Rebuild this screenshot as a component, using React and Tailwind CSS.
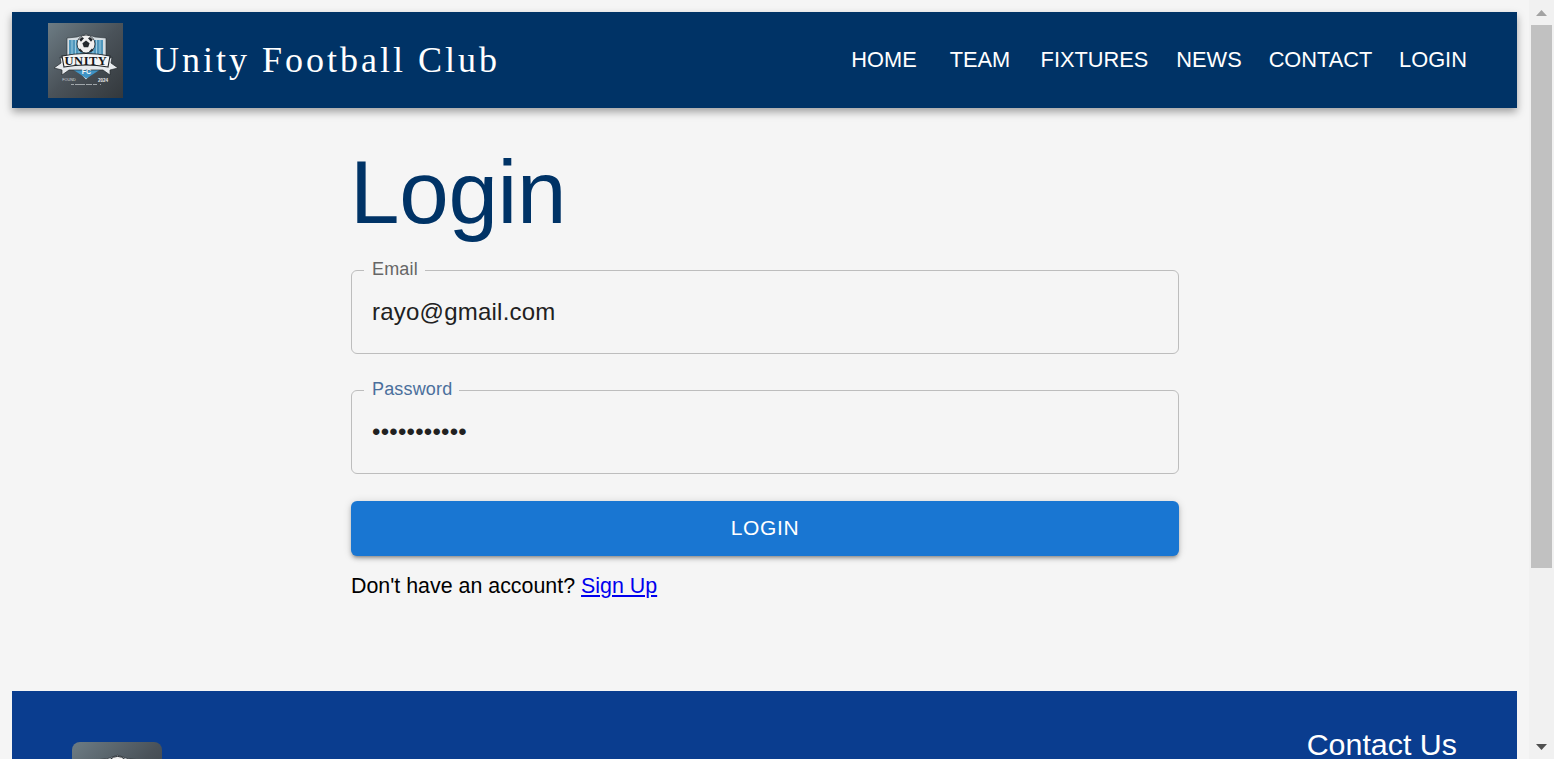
import React from "react";

const navItems = [
  { label: "HOME", width: "w-[100px]" },
  { label: "TEAM", width: "w-[92px]" },
  { label: "FIXTURES", width: "w-[137px]" },
  { label: "NEWS", width: "w-[92px]" },
  { label: "CONTACT", width: "w-[131px]" },
  { label: "LOGIN", width: "w-[94px]" },
];

const ClubLogo = ({ id, className }) => (
  <svg viewBox="0 0 75 75" className={className} preserveAspectRatio="xMidYMin slice">
    <defs>
      <linearGradient id={id} x1="0" y1="0" x2="1" y2="1">
        <stop offset="0" stopColor="#6d7c84" />
        <stop offset="0.5" stopColor="#4a5259" />
        <stop offset="1" stopColor="#33383c" />
      </linearGradient>
    </defs>
    <rect width="75" height="75" fill={`url(#${id})`} />
    {/* shield */}
    <path d="M19 15 L29 14 L38 11 L47 14 L58 15 L58 36 L38 57 L19 36 Z" fill="#d5dde2" stroke="#2a3035" strokeWidth="0.6" />
    <path d="M21 17 L55 17 L55 34 L21 34 Z" fill="#4f97bd" />
    <path d="M24 17V34M27.5 17V34M31 17V34M45 17V34M48.5 17V34M52 17V34" stroke="#9dcbe0" strokeWidth="1" />
    <path d="M24 41 L53 41 L53 46 L38.5 55.5 L24 46 Z" fill="#3f94c6" />
    {/* ball */}
    <circle cx="38" cy="21" r="9" fill="#efefef" stroke="#20262b" strokeWidth="0.8" />
    <path d="M38 17.5 L41.6 20.2 L40.2 24.3 L35.8 24.3 L34.4 20.2 Z" fill="#23282d" />
    <path d="M31.2 16.5 L34 14 L36 15.2 L33 18.8 Z M44.8 16.5 L42 14 L40 15.2 L43 18.8 Z M32 25.5 L35 28.5 L34 29.6 L30.4 27.2 Z M44 25.5 L41 28.5 L42 29.6 L45.6 27.2 Z" fill="#23282d" />
    {/* ribbon */}
    <path d="M6 45 L13 40 L12 34 L19 38 L57 38 L64 34 L63 40 L70 45 L62 47 L62 52 L55 47 L21 47 L14 52 L14 47 Z" fill="#e6eaed" stroke="#23282d" strokeWidth="0.7" />
    <path d="M14 33 Q38 28 62 33 L60 44 Q38 40 16 44 Z" fill="#f4f5f6" stroke="#1f2428" strokeWidth="1.1" />
    <text x="38" y="41.5" textAnchor="middle" fontFamily="'Liberation Serif', serif" fontWeight="700" fontSize="12.5" fill="#14171a" letterSpacing="0.5">UNITY</text>
    <text x="38.5" y="50.5" textAnchor="middle" fontFamily="'Liberation Sans', sans-serif" fontWeight="700" fontSize="7" fill="#f2f7fa">FC</text>
    <text x="21" y="58" textAnchor="middle" fontFamily="'Liberation Sans', sans-serif" fontSize="3.8" fill="#d5d9dc">FOUND</text>
    <text x="55" y="58.5" textAnchor="middle" fontFamily="'Liberation Sans', sans-serif" fontSize="4.6" fontWeight="700" fill="#e4e7e9">2024</text>
    <path d="M23 61.5 H54" stroke="#b9bfc3" strokeWidth="0.8" strokeDasharray="3 1 10 1 6 1 4" />
  </svg>
);

const OutlinedField = ({ label, labelColor, type, value }) => (
  <div className="relative h-[84px] rounded-[6px] border border-[#bdbdbd]">
    <span className={`absolute left-3 top-[-12px] bg-[#f5f5f5] pl-2 pr-[7px] text-[18px] leading-[21px] tracking-[0.17px] ${labelColor}`}>
      {label}
    </span>
    <input
      type={type}
      value={value}
      readOnly
      className="h-full w-full bg-transparent px-5 text-[24px] tracking-[0.225px] text-[#212121] outline-none"
    />
  </div>
);

export default function App() {
  return (
    <div className="flex h-[759px] overflow-hidden bg-[#f5f5f5] font-['Liberation_Sans',Arial,sans-serif]">
      <div className="flex w-[1529px] shrink-0 flex-col px-3 pt-3">
        <header className="flex h-24 shrink-0 items-center bg-[#003366] pl-9 shadow-[0_4px_8px_rgba(0,0,0,0.35)]">
          <ClubLogo id="header-logo" className="h-[75px] w-[75px]" />
          <h3 className="ml-[30px] font-['Liberation_Serif',serif] text-[36px] leading-none tracking-[3px] text-white">
            Unity Football Club
          </h3>
          <nav className="ml-auto mr-[37px] flex items-center text-[21.8px] text-white">
            {navItems.map((item) => (
              <a key={item.label} className={`${item.width} text-center`}>
                {item.label}
              </a>
            ))}
          </nav>
        </header>

        <main className="flex h-[583px] shrink-0 flex-col pl-[339px]">
          <div className="w-[828px]">
            <h1 className="ml-[-1px] mt-[34px] text-[89px] leading-[101px] tracking-[-0.3px] text-[#003366]">Login</h1>
            <div className="mt-[27px] flex flex-col gap-9">
              <OutlinedField label="Email" labelColor="text-[#666666]" type="email" value="rayo@gmail.com" />
              <OutlinedField label="Password" labelColor="text-[#4a6f9c]" type="password" value="rayo@123456" />
            </div>
            <button className="mt-[27px] h-[55px] w-full rounded-[6px] bg-[#1976d2] pb-[2px] text-[21px] tracking-[0.6px] text-white shadow-[0_3px_3px_-2px_rgba(0,0,0,0.25),0_3px_4px_rgba(0,0,0,0.18),0_1px_8px_rgba(0,0,0,0.14)]">
              LOGIN
            </button>
            <p className="mt-[18px] text-[21.4px] leading-[24px] text-black">
              Don't have an account? <a className="text-[#0000ee] underline">Sign Up</a>
            </p>
          </div>
        </main>

        <footer className="flex h-[200px] shrink-0 justify-between bg-[#0a3d8f] pl-[60px] pr-[60px] pt-[51px]">
          <ClubLogo id="footer-logo" className="h-[90px] w-[90px] rounded-lg" />
          <h4 className="mt-[-15px] text-[30.4px] leading-[35px] text-white">Contact Us</h4>
        </footer>
      </div>

      {/* window scrollbar */}
      <div className="flex w-[25px] shrink-0 flex-col items-center bg-[#f1f1f1]">
        <div className="flex h-[25px] items-center justify-center">
          <svg width="11" height="6" viewBox="0 0 11 6"><path d="M5.5 0 L11 6 H0 Z" fill="#a3a3a3" /></svg>
        </div>
        <div className="h-[543px] w-[21px] bg-[#c1c1c1]" />
        <div className="mt-auto flex h-[25px] items-center justify-center">
          <svg width="11" height="6" viewBox="0 0 11 6"><path d="M0 0 H11 L5.5 6 Z" fill="#505050" /></svg>
        </div>
      </div>
    </div>
  );
}
